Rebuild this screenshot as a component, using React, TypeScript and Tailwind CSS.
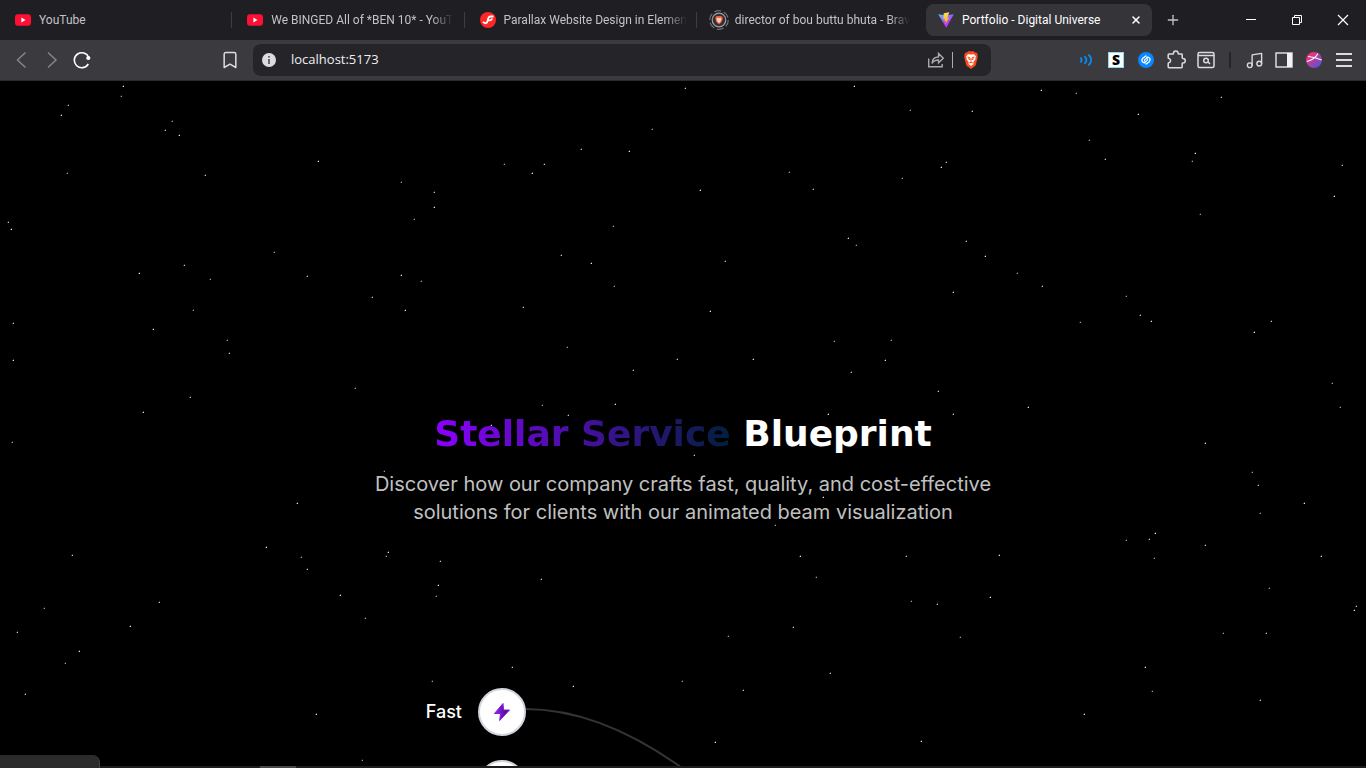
import React from "react";
import { Music, X, Plus, Bookmark } from "lucide-react";

const STARS: [number, number][] = [
[123,86],[121,96],[68,105],[61,115],[172,121],[165,130],[179,135],[67,173],[205,175],[318,161],[401,182],[434,192],[434,207],[414,219],[8,222],[11,229],[274,252],[184,265],[139,273],[210,279],[307,276],[401,275],[421,281],[372,297],[405,310],[193,310],[13,323],[153,329],[227,340],[229,353],[13,360],[355,388],[190,397],[143,412],[12,442],
[685,88],[854,86],[652,129],[581,149],[629,151],[504,164],[544,164],[532,173],[789,172],[813,189],[700,190],[613,226],[561,255],[591,263],[614,286],[725,261],[848,238],[856,245],[523,307],[710,311],[567,347],[677,359],[753,359],[834,341],[851,372],[885,360],[891,340],[633,370],[615,404],[542,405],[568,415],[828,414],
[910,110],[972,111],[1041,90],[1076,93],[1221,97],[1138,114],[1089,140],[1105,159],[1195,153],[1192,161],[946,162],[941,167],[902,178],[1342,165],[1334,196],[1200,214],[966,241],[985,256],[1017,273],[1042,286],[953,292],[1126,296],[1140,315],[1151,321],[1080,322],[1271,321],[1254,332],[1332,383],[938,391],[1028,407],[1340,407],[953,414],[1205,443],[1252,472],[1258,485],[1304,503],[1260,513],[491,425],
[297,503],[384,471],[694,455],[823,497],[775,525],[72,555],[266,547],[301,557],[307,569],[388,552],[386,556],[440,561],[438,585],[436,596],[541,579],[340,595],[365,618],[159,602],[130,626],[44,608],[17,632],[79,651],[65,663],[25,694],[316,714],[432,681],[512,667],[573,686],[682,681],[743,690],[715,742],[728,636],[793,627],[800,556],[816,577],[906,556],[999,555],[911,601],[937,604],[990,597],[960,637],[830,673],[921,741],[1126,540],[1149,539],[1155,533],[1154,558],[1205,545],[1321,556],[1269,588],[1356,606],[1354,610],[1223,633],[1266,633],[1145,667],[1152,691],[1260,700],[1084,714],[362,760],
];

function Starfield() {
  return (
    <svg className="pointer-events-none absolute left-0 top-0" width="1366" height="685" aria-hidden="true">
      {STARS.map(([x, y], i) => (
        <g key={i} fill={["#e5e5e5", "#9a9a9a", "#c4c4c4"][i % 3]}>
          <rect x={x} y={y - 81} width="1" height="1" />
          <rect x={x} y={y - 82} width="1" height="1" opacity=".3" />
          <rect x={x - 1} y={y - 81} width="1" height="1" opacity=".3" />
        </g>
      ))}
    </svg>
  );
}

function YouTubeIcon() {
  return (
    <svg className="h-4 w-4 shrink-0" viewBox="0 0 16 16" aria-hidden="true">
      <rect y="2.3" width="16" height="11.4" rx="3" fill="#ff0f33" />
      <path d="M6.4 5.6 10.5 8l-4.1 2.4z" fill="#fff" />
    </svg>
  );
}
function ParallaxIcon() {
  return (
    <svg className="h-4 w-4 shrink-0" viewBox="0 0 16 16" aria-hidden="true">
      <circle cx="8" cy="8" r="8" fill="#ff2626" />
      <path d="M3 9.800c1.900 2.400 4.100 1.500 4.600-.8.6-2.800.6-4.200 2.400-4.500H13.500M8.500 8.300c2 .5 3.200-.4 3.400-2" fill="none" stroke="#fff" strokeWidth="1.800" />
    </svg>
  );
}
const SHIELD = "M5 1.500 6.300.3h5.400L13 1.500l1.300-.1 1.500 2-.4 1.400.4 1.300-1.900 7.300c-.3 1.200-1 1.700-2 2.400L9 18l-2.900-2.200c-1-.7-1.700-1.200-2-2.400L2.200 6.100l.4-1.300-.4-1.400 1.500-2z";
function BraveIcon() {
  return (
    <svg className="h-[18px] w-[18px]" viewBox="0 0 18 18" aria-hidden="true">
      <path d={SHIELD} fill="#fb4a1c" />
      <path d="M6 3.200 9 3.600l3-.4 2 2.200-.7 1.400.2 1.500-2.300 3 .4 1.600L9 15l-2.600-2.100.4-1.600-2.300-3 .2-1.500L4 5.400z" fill="#fff" />
      <path d="m5.500 6 2.400.7.4 2-2.200-1M12.500 6l-2.400.7-.4 2 2.200-1M9 9.500v1.700M7.200 12 9 11.300l1.800.7" fill="none" stroke="#fb4a1c" strokeWidth="1" />
    </svg>
  );
}
function LoadingBraveIcon() {
  return (
    <svg className="h-5 w-5 shrink-0" viewBox="0 0 20 20" aria-hidden="true">
      <circle cx="10" cy="10" r="9.300" fill="none" stroke="#707076" strokeWidth="1.200" strokeDasharray="7 2.700" />
      <circle cx="10" cy="10" r="6.800" fill="#303035" stroke="#a1a1a6" strokeWidth="1.200" />
      <path d="M7.500 6h5l1.300 1.700-1 4.300-2.800 2.500L7.200 12l-1-4.300z" fill="#f05a3c" />
      <path d="m8 7.700 2 .3 2-.3.600 1.300-1.400 3L10 13l-1.200-1-1.400-3z" fill="#ffd0c4" />
    </svg>
  );
}
function ViteIcon() {
  return (
    <svg className="h-4 w-4 shrink-0" viewBox="0 0 16 16" aria-hidden="true">
      <defs>
        <linearGradient id="vite-a" x1="0" y1="0" x2=".6" y2="1"><stop stopColor="#41d1ff" /><stop offset=".7" stopColor="#bd34fe" /></linearGradient>
        <linearGradient id="vite-b" x1="0" y1="0" x2="0" y2="1"><stop stopColor="#ffdc60" /><stop offset="1" stopColor="#ffa800" /></linearGradient>
      </defs>
      <path d="M.2 2.300 8 3.600l7.800-1.300L8.300 15.800z" fill="url(#vite-a)" />
      <path d="m11.300.2-5.600 1.100-.4 6 1.700-.3-.5 2.300 1.500-.4-.8 3.900 3.900-7.200-1.900.3z" fill="url(#vite-b)" />
    </svg>
  );
}

function Tab({ icon, title, divider, wide, fade }: { icon: React.ReactNode; title: string; divider?: boolean; wide?: boolean; fade?: boolean }) {
  return (
    <button className={`relative flex h-8 min-w-0 flex-1 items-center pr-2 text-[#c3c3c6] ${wide ? "gap-1.5 pl-3" : "gap-2 pl-[15px]"}`}>
      {icon}
      <span className={`whitespace-nowrap text-left ${fade ? "[mask-image:linear-gradient(to_right,#000_88%,transparent)]" : ""}`}>{title}</span>
      {divider && <span className="absolute right-0 top-2 h-4 w-px bg-[#3d3d42]" />}
    </button>
  );
}

function TabStrip() {
  return (
    <div className="flex h-10 items-center bg-[#1f1e23] font-['Roboto','Open_Sans',sans-serif] text-[12px]">
      <nav aria-label="Tabs" className="flex w-[1152px] shrink items-center">
        <Tab icon={<YouTubeIcon />} title="YouTube" divider />
        <Tab icon={<YouTubeIcon />} title="We BINGED All of *BEN 10* - YouT" divider fade />
        <Tab icon={<ParallaxIcon />} title="Parallax Website Design in Elemen" divider fade />
        <Tab icon={<LoadingBraveIcon />} title="director of bou buttu bhuta - Brav" wide fade />
        <div className="flex h-8 w-[226px] shrink-0 items-center rounded-lg bg-[#353439] pl-3 pr-2 text-white">
          <ViteIcon />
          <span className="ml-2 flex-1 whitespace-nowrap">Portfolio - Digital Universe</span>
          <button aria-label="Close tab" className="grid h-4 w-4 place-items-center"><X size={12} strokeWidth={3} /></button>
        </div>
      </nav>
      <button aria-label="New tab" className="grid h-8 w-[42px] place-items-center text-[#c3c3c6]"><Plus size={16} strokeWidth={2} /></button>
      <div className="ml-auto flex text-white">
        <button aria-label="Minimize" className="grid h-10 w-[46px] place-items-center">
          <svg width="10" height="10" viewBox="0 0 10 10" stroke="currentColor" aria-hidden="true"><path d="M0 4.500h10" /></svg>
        </button>
        <button aria-label="Restore" className="grid h-10 w-[46px] place-items-center">
          <svg width="12" height="12" viewBox="0 0 12 12" fill="none" stroke="currentColor" aria-hidden="true"><path d="M1.500 3.500h7v7h-7zM3.500 3V1.500h7v7H9" /></svg>
        </button>
        <button aria-label="Close" className="grid h-10 w-[46px] place-items-center">
          <svg width="12" height="12" viewBox="0 0 12 12" stroke="currentColor" strokeWidth="1.200" aria-hidden="true"><path d="m1 1 10 10M11 1 1 11" /></svg>
        </button>
      </div>
    </div>
  );
}

const TOOL = "grid h-[30px] w-[30px] place-items-center";

function Toolbar() {
  return (
    <div className="flex h-[41px] items-center border-b border-[#2b2a2f] bg-[#3b3a3f] px-[7px] text-[#dcdce0]">
      <button aria-label="Back" className={TOOL}><svg width="18" height="18" viewBox="0 0 18 18" fill="none" stroke="#85858a" strokeWidth="1.500"><path d="m12.500 1.500-8 7.500 8 7.500" /></svg></button>
      <button aria-label="Forward" className={TOOL}><svg width="18" height="18" viewBox="0 0 18 18" fill="none" stroke="#85858a" strokeWidth="1.500"><path d="m5 1.500 8 7.500-8 7.500" /></svg></button>
      <button aria-label="Reload" className={TOOL}>
        <svg width="18" height="18" viewBox="0 0 18 18" fill="none" stroke="#fff" strokeWidth="1.600"><path d="M15.800 6.500A7.500 7.500 0 1 0 15.300 13" /><circle cx="15.300" cy="7" r="2.100" fill="#fff" stroke="none" /></svg>
      </button>
      <button aria-label="Bookmark" className="ml-[118px] grid h-[30px] w-[30px] place-items-center"><Bookmark size={20} strokeWidth={1.8} /></button>
      <div className="ml-2 flex h-8 w-[738px] shrink items-center rounded-lg bg-[#252429] pl-2 pr-1.5">
        <svg width="16" height="16" viewBox="0 0 16 16" aria-hidden="true"><circle cx="8" cy="8" r="7" fill="#dcdce0" /><path d="M7.200 4h1.600v1.600H7.200zM7.200 7h1.600v5H7.200z" fill="#4a494e" /></svg>
        <div className="ml-[14px] flex-1 font-['Open_Sans','Noto_Sans',sans-serif] text-[13px]">
          <input aria-label="Address" defaultValue="localhost:5173" className="w-full bg-transparent text-[#efeff2] outline-none" />
        </div>
        <button aria-label="Share" className="grid h-6 w-6 place-items-center">
          <svg width="18" height="18" viewBox="0 0 18 18" fill="none" stroke="#a9a9ae" strokeWidth="1.400"><path d="M1.700 7.500v8.300h13.500V13M5 12.500c.2-4.500 2.800-6.500 6.500-6.500V2.500l4.800 4.800-4.800 4.500V9C8.500 9 6.500 9.800 5 12.500Z" /></svg>
        </button>
        <span className="mx-1 h-4 w-px bg-[#aaaab0]" />
        <button aria-label="Brave Shields" className="grid h-6 w-7 place-items-center"><BraveIcon /></button>
      </div>
      <div className="ml-auto flex items-center">
        <button aria-label="Audio extension" className={TOOL}>
          <svg width="16" height="16" viewBox="0 0 16 16" fill="none" stroke="#078df2" strokeWidth="1.800"><path d="M2.500 5.500c1.300 1.500 1.300 3.500 0 5M6.500 4c2.300 2.400 2.300 5.600 0 8M10.500 2.500c3.500 3.400 3.500 7.600 0 11" /></svg>
        </button>
        <button aria-label="S extension" className={TOOL}><span className="grid h-4 w-4 place-items-center border border-[#8adcf2] bg-white font-['Open_Sans',sans-serif] text-[14px] font-extrabold leading-none text-black">S</span></button>
        <button aria-label="Shazam" className={TOOL}>
          <svg width="16" height="16" viewBox="0 0 16 16" fill="none"><circle cx="8" cy="8" r="8" fill="#0788ff" /><path d="M7 10.800C4.500 11.200 2.700 8.300 4.800 6.300L7.800 4M9 5.200c2.500-.4 4.300 2.500 2.200 4.500L8.200 12M6.500 8.500c-.3-1.200 2-2 2.800-2.800M9.500 7.500c.3 1.200-2 2-2.800 2.800" stroke="#fff" strokeWidth="1.400" strokeLinecap="round" /></svg>
        </button>
        <button aria-label="Extensions" className={TOOL}>
          <svg width="20" height="20" viewBox="0 0 20 20" fill="none" stroke="currentColor" strokeWidth="1.500" strokeLinejoin="round"><path d="M3 4h3.800c.5 0 .7-.3.700-.8a2.300 2.300 0 0 1 4.600 0c0 .5.2.8.7.8h2.700c.4 0 .7.3.7.700v3c0 .5.300.700.8.800a2.300 2.300 0 0 1 0 4.600c-.5 0-.8.200-.8.700v3.200c0 .4-.3.700-.7.700H3c-.5 0-.8-.3-.8-.7v-3.500c0-.5.200-.7.700-.8a2.200 2.200 0 0 0 0-4.300c-.5 0-.7-.3-.7-.8V4.700c0-.4.300-.7.800-.7Z" /></svg>
        </button>
        <button aria-label="Search tabs" className={TOOL}>
          <svg width="18" height="18" viewBox="0 0 18 18" fill="none" stroke="currentColor" strokeWidth="1.500"><rect x="1" y="1.500" width="16" height="15" rx="1.500" /><path d="M1 4.500h16m-6 6.500 2 2" /><circle cx="9" cy="9.500" r="2.300" /></svg>
        </button>
        <span className="mx-2 h-4 w-0.5 bg-[#252429]" />
        <button aria-label="Media" className={TOOL}><Music size={19} strokeWidth={1.7} /></button>
        <button aria-label="Sidebar" className={TOOL}>
          <svg width="18" height="16" viewBox="0 0 18 16" fill="none" stroke="currentColor" strokeWidth="1.500"><rect x="1" y="1" width="16" height="14" /><path d="M12 1h5v14h-5z" fill="#f2f2f6" stroke="none" /></svg>
        </button>
        <button aria-label="Profile" className={TOOL}>
          <svg width="16" height="16" viewBox="0 0 16 16" fill="none"><defs><linearGradient id="profile" x1=".2" y1=".2" x2=".9" y2="1"><stop stopColor="#f0327b" /><stop offset="1" stopColor="#4a55e0" /></linearGradient></defs><circle cx="8" cy="8" r="8" fill="url(#profile)" /><path d="M.8 9.500C5 8.500 9.500 6 12 1.500M2 4.500c5 .2 9 1.500 13.500 3.500" stroke="#fff" strokeWidth="1.100" /></svg>
        </button>
        <button aria-label="Menu" className={TOOL}>
          <svg width="16" height="16" viewBox="0 0 16 16" stroke="#dcdce0" strokeWidth="2"><path d="M0 2h16M0 8h16M0 14h16" /></svg>
        </button>
      </div>
    </div>
  );
}

export default function App() {
  return (
    <div className="flex h-screen flex-col overflow-hidden bg-black">
      <header>
        <TabStrip />
        <Toolbar />
      </header>
      <main className="relative flex-1 overflow-hidden bg-black font-['Inter',sans-serif] text-white">
        <section className="flex flex-col items-center pt-[333px]">
          <h1 className="whitespace-nowrap font-['DejaVu_Sans',sans-serif] text-[36px] font-bold leading-10">
            <span className="bg-[linear-gradient(to_right,#8b00ff,#001f3f)] bg-clip-text text-transparent">Stellar Service</span> Blueprint
          </h1>
          <p className="mt-4 max-w-2xl text-center text-xl leading-7 text-[#c0c0c0]">Discover how our company crafts fast, quality, and cost-effective solutions for clients with our animated beam visualization</p>
          <div className="relative mt-[162px] w-[516px]">
            <svg className="absolute left-[100px] top-0" width="300" height="120" fill="none" aria-hidden="true">
              <path d="M0 21Q78 21 164 85" stroke="#343434" strokeWidth="2" />
            </svg>
            <ul className="relative flex flex-col gap-6">
              <li className="flex items-center gap-4">
                <span className="w-[37px] whitespace-nowrap text-right text-lg font-medium">Fast</span>
                <span className="grid h-12 w-12 place-items-center rounded-full border-2 border-[#d1d5db] bg-white">
                  <svg width="18" height="20" viewBox="0 0 18 20" aria-hidden="true"><defs><linearGradient id="bolt"><stop stopColor="#9b22f5" /><stop offset="1" stopColor="#35106c" /></linearGradient></defs><path d="m10 1.500-8.500 10h6L6.700 18.500 16.500 8h-6z" fill="url(#bolt)" stroke="#8617e8" /></svg>
                </span>
              </li>
              <li className="flex items-center gap-4">
                <span className="w-[37px]" />
                <span className="h-12 w-12 rounded-full border-2 border-[#d1d5db] bg-white" />
              </li>
            </ul>
          </div>
        </section>
        <Starfield />
      </main>
      <footer className="relative h-0.5 bg-[#1d1d1d]">
        <div className="ml-[260px] h-0.5 w-9 bg-[#484848]" />
        <div className="absolute bottom-0 left-0 h-[13px] w-[100px] rounded-tr-lg border-r border-[#444] bg-[#2b2b2b]" />
      </footer>
    </div>
  );
}
